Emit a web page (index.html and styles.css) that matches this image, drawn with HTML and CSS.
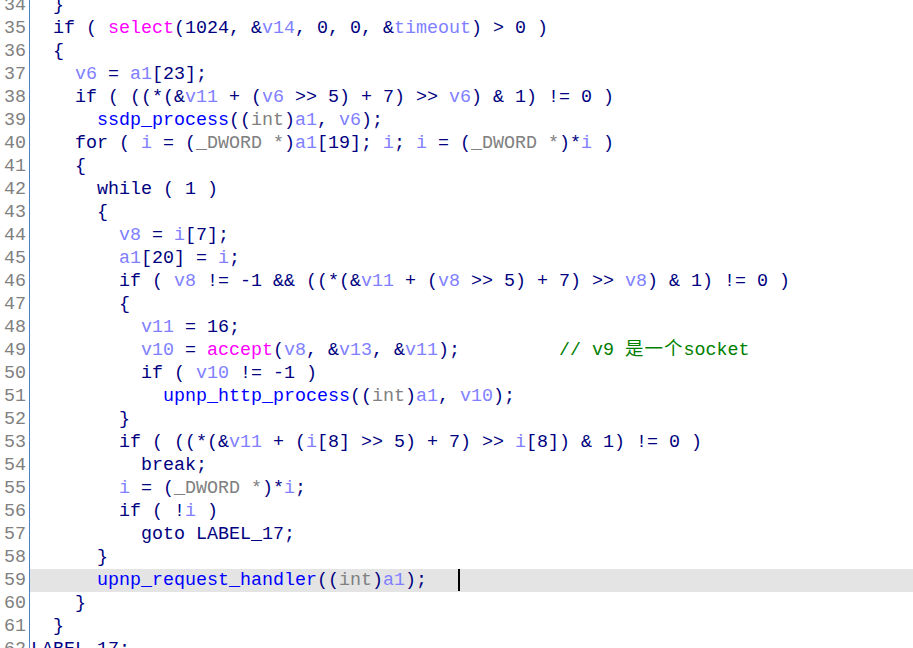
FILE: index.html
```html
<!DOCTYPE html>
<html>
<head>
<meta charset="utf-8">
<link rel="stylesheet" href="styles.css">
</head>
<body>
<div class="view">
<div class="row"><span class="ln">34</span><span class="code">  }</span></div>
<div class="row"><span class="ln">35</span><span class="code">  if ( <span class="f">select</span>(1024, &amp;<span class="v">v14</span>, 0, 0, &amp;<span class="v">timeout</span>) &gt; 0 )</span></div>
<div class="row"><span class="ln">36</span><span class="code">  {</span></div>
<div class="row"><span class="ln">37</span><span class="code">    <span class="v">v6</span> = <span class="v">a1</span>[23];</span></div>
<div class="row"><span class="ln">38</span><span class="code">    if ( ((*(&amp;<span class="v">v11</span> + (<span class="v">v6</span> &gt;&gt; 5) + 7) &gt;&gt; <span class="v">v6</span>) &amp; 1) != 0 )</span></div>
<div class="row"><span class="ln">39</span><span class="code">      <span class="b">ssdp_process</span>((<span class="t">int</span>)<span class="v">a1</span>, <span class="v">v6</span>);</span></div>
<div class="row"><span class="ln">40</span><span class="code">    for ( <span class="v">i</span> = (<span class="t">_DWORD *</span>)<span class="v">a1</span>[19]; <span class="v">i</span>; <span class="v">i</span> = (<span class="t">_DWORD *</span>)*<span class="v">i</span> )</span></div>
<div class="row"><span class="ln">41</span><span class="code">    {</span></div>
<div class="row"><span class="ln">42</span><span class="code">      while ( 1 )</span></div>
<div class="row"><span class="ln">43</span><span class="code">      {</span></div>
<div class="row"><span class="ln">44</span><span class="code">        <span class="v">v8</span> = <span class="v">i</span>[7];</span></div>
<div class="row"><span class="ln">45</span><span class="code">        <span class="v">a1</span>[20] = <span class="v">i</span>;</span></div>
<div class="row"><span class="ln">46</span><span class="code">        if ( <span class="v">v8</span> != -1 &amp;&amp; ((*(&amp;<span class="v">v11</span> + (<span class="v">v8</span> &gt;&gt; 5) + 7) &gt;&gt; <span class="v">v8</span>) &amp; 1) != 0 )</span></div>
<div class="row"><span class="ln">47</span><span class="code">        {</span></div>
<div class="row"><span class="ln">48</span><span class="code">          <span class="v">v11</span> = 16;</span></div>
<div class="row"><span class="ln">49</span><span class="code">          <span class="v">v10</span> = <span class="f">accept</span>(<span class="v">v8</span>, &amp;<span class="v">v13</span>, &amp;<span class="v">v11</span>);         <span class="c">// v9 <span class="cjk">是一个</span>socket</span></span></div>
<div class="row"><span class="ln">50</span><span class="code">          if ( <span class="v">v10</span> != -1 )</span></div>
<div class="row"><span class="ln">51</span><span class="code">            <span class="b">upnp_http_process</span>((<span class="t">int</span>)<span class="v">a1</span>, <span class="v">v10</span>);</span></div>
<div class="row"><span class="ln">52</span><span class="code">        }</span></div>
<div class="row"><span class="ln">53</span><span class="code">        if ( ((*(&amp;<span class="v">v11</span> + (<span class="v">i</span>[8] &gt;&gt; 5) + 7) &gt;&gt; <span class="v">i</span>[8]) &amp; 1) != 0 )</span></div>
<div class="row"><span class="ln">54</span><span class="code">          break;</span></div>
<div class="row"><span class="ln">55</span><span class="code">        <span class="v">i</span> = (<span class="t">_DWORD *</span>)*<span class="v">i</span>;</span></div>
<div class="row"><span class="ln">56</span><span class="code">        if ( !<span class="v">i</span> )</span></div>
<div class="row"><span class="ln">57</span><span class="code">          goto LABEL_17;</span></div>
<div class="row"><span class="ln">58</span><span class="code">      }</span></div>
<div class="row"><span class="ln">59</span><span class="code hl">      <span class="b">upnp_request_handler</span>((<span class="t">int</span>)<span class="v">a1</span>);   <span class="caret"></span></span></div>
<div class="row"><span class="ln">60</span><span class="code">    }</span></div>
<div class="row"><span class="ln">61</span><span class="code">  }</span></div>
<div class="row"><span class="ln">62</span><span class="code">LABEL_17:</span></div>
</div>
</body>
</html>
```
FILE: styles.css
```css
html, body {
  margin: 0;
  padding: 0;
  background: #ffffff;
  overflow: hidden;
}
.view {
  margin-top: -6px;
  font-family: "Liberation Mono", monospace;
  font-size: 18.33px;
  line-height: 23px;
  color: #000080;
}
.row {
  display: flex;
  height: 23px;
}
.ln {
  width: 26px;
  padding-right: 3px;
  text-align: right;
  color: #808080;
  border-right: 1px solid #4a82c8;
  flex: none;
  white-space: pre;
}
.code {
  flex: 1;
  padding-left: 1px;
  white-space: pre;
}
.hl {
  background: #e4e4e4;
}
.v { color: #8080ff; }
.f { color: #ff00ff; }
.b { color: #0000ff; }
.t { color: #808080; }
.c { color: #008000; }
.cjk {
  display: inline-block;
  font-family: "Noto Sans CJK SC", sans-serif;
  font-size: 18.5px;
  height: 16px;
  line-height: 16px;
  letter-spacing: 1px;
  vertical-align: baseline;
}
.caret {
  display: inline-block;
  width: 2px;
  height: 22px;
  margin-left: -2px;
  vertical-align: top;
  background: #000000;
}
```
